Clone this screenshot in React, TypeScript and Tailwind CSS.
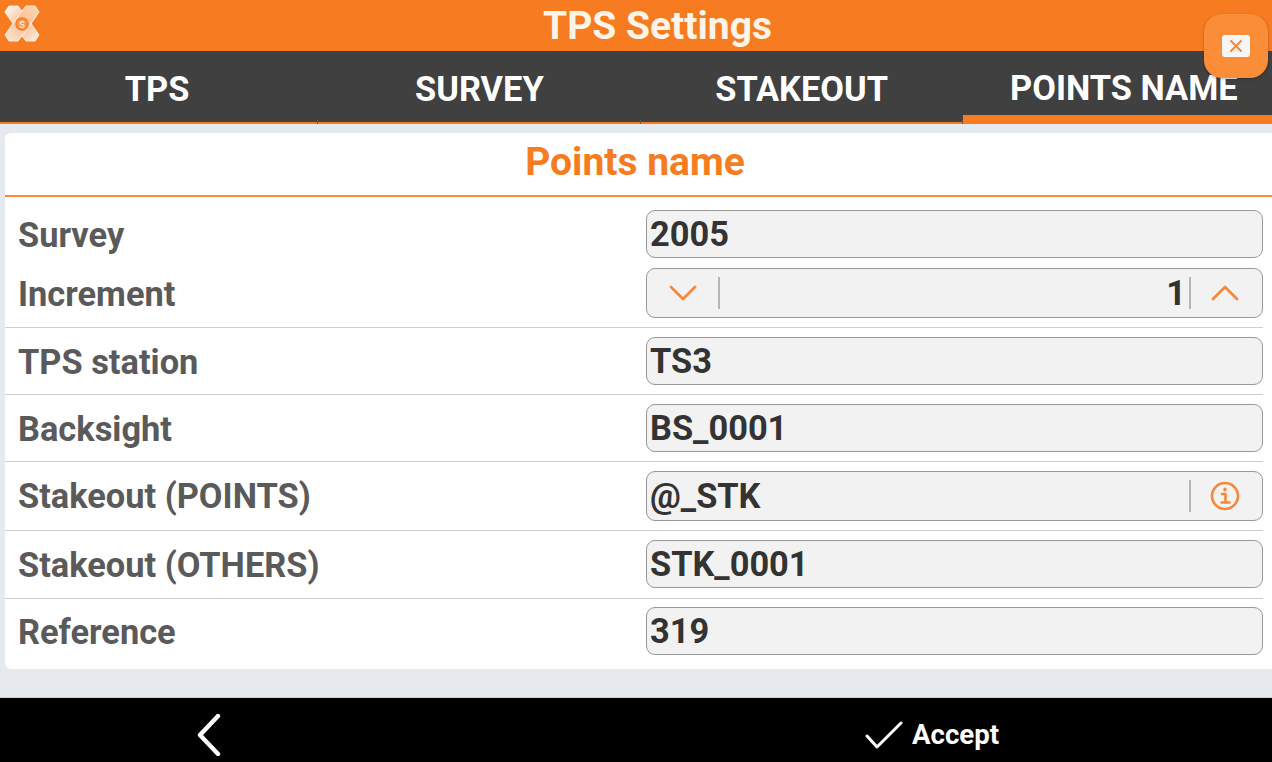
function Logo() {
  return (
    <svg width="36" height="37" viewBox="0 0 36 37" className="shrink-0">
      <defs>
        <linearGradient id="a" x1="0" y1="0" x2="1" y2="1">
          <stop offset="0" stopColor="#ffffff" />
          <stop offset="0.5" stopColor="#f9b98a" />
          <stop offset="1" stopColor="#fff1e6" />
        </linearGradient>
        <linearGradient id="b" x1="1" y1="0" x2="0" y2="1">
          <stop offset="0" stopColor="#fbd3b4" />
          <stop offset="0.5" stopColor="#fbc297" />
          <stop offset="1" stopColor="#fde6d3" />
        </linearGradient>
      </defs>
      <path d="M5 1H14L24 14L35 30L31 36H22L12 23L1 7Z" fill="url(#a)" stroke="#fff1e6" strokeWidth="1" strokeLinejoin="round" />
      <path d="M22 1H31L35 7L24 23L14 36H5L1 30L12 14Z" fill="url(#b)" stroke="#fff1e6" strokeWidth="1" strokeLinejoin="round" />
      <circle cx="18" cy="19" r="6" fill="#f9934c" stroke="#f77b21" strokeWidth="1.5" />
      <text x="18" y="23" textAnchor="middle" fontSize="12" fontFamily="Roboto" fill="#ffeede">s</text>
    </svg>
  );
}

function Tab({ label, active }: { label: string; active?: boolean }) {
  return (
    <div className={`flex-1 flex items-center justify-center relative border-[#f77b21] ${active ? "border-b-[9px]" : "border-b-2"}`}>
      <span className={active ? "relative top-[6px]" : "relative top-[3px]"}>{label}</span>
      {!active && <span className="absolute right-0 bottom-[-2px] w-px h-[4px] bg-[#6b5a4c]" />}
    </div>
  );
}

function Chevron({ up }: { up?: boolean }) {
  return (
    <svg width="28" height="16" viewBox="0 0 28 16" fill="none" stroke="#f7873a" strokeWidth="2.8" strokeLinecap="round" strokeLinejoin="round">
      <path d={up ? "M2 14L14 2L26 14" : "M2 2L14 14L26 2"} />
    </svg>
  );
}

function Field({ value }: { value: string }) {
  return (
    <div className="h-[48px] flex-1 rounded-[9px] border-[1.5px] border-[#999999] bg-[#f2f2f2] flex items-center pl-[3px] text-[34.4px] leading-none font-bold text-[#333333]">
      {value}
    </div>
  );
}

function Row({ label, children, divider, h, pt, top = "" }: { label: string; children: React.ReactNode; divider?: boolean; h: string; pt: string; top?: string }) {
  return (
    <div className={`${h} ${pt} flex ${divider ? "border-b border-[#cfcfcf]" : ""}`}>
      <div className={`w-[641px] text-[34.4px] leading-[50px] font-bold text-[#5a5a5a] pl-[13px] shrink-0 ${top}`}>{label}</div>
      {children}
    </div>
  );
}

export default function App() {
  return (
    <div className="w-[1272px] h-[762px] flex flex-col bg-[#e6e9ee] overflow-hidden relative font-['Roboto',sans-serif]">
      <header className="h-[51px] bg-[#f77b21] flex items-start pt-[5px] relative shrink-0">
        <div className="pl-[4px]"><Logo /></div>
        <div className="absolute inset-0 flex items-center justify-center text-[39px] font-bold text-[#fff4e8] pl-[43px] pt-[2px]">TPS Settings</div>
      </header>
      <nav className="h-[73px] bg-[#404040] flex text-[34.4px] font-bold text-white shrink-0 w-[1289px] ml-[-4px]">
        <Tab label="TPS" />
        <Tab label="SURVEY" />
        <Tab label="STAKEOUT" />
        <Tab label="POINTS NAME" active />
      </nav>
      <main className="mt-[9px] ml-[5px] h-[536px] bg-white rounded-tl-[6px] rounded-bl-[6px] shrink-0">
        <div className="h-[64px] border-b-2 border-[#f98a3c] flex items-center justify-center text-[39px] font-bold text-[#f77b21] pr-[7px] pb-[4px]">Points name</div>
        <div className="pr-[9px]">
          <div className="h-[13px]" />
          <Row label="Survey" h="h-[58px]" pt="pt-0"><Field value="2005" /></Row>
          <Row label="Increment" h="h-[60px]" pt="pt-0" divider top="pt-px">
            <div className="h-[50px] flex-1 rounded-[9px] border-[1.5px] border-[#999999] bg-[#f2f2f2] flex items-center text-[34.4px] font-bold text-[#333333]">
              <div className="w-[71px] flex justify-center pl-[1px]"><Chevron /></div>
              <div className="w-[2px] h-[32px] bg-[#b5b5b5]" />
              <div className="flex-1 text-right pr-[3px] leading-none">1</div>
              <div className="w-[2px] h-[32px] bg-[#b5b5b5]" />
              <div className="w-[71px] flex justify-center pr-[3px]"><Chevron up /></div>
            </div>
          </Row>
          <Row label="TPS station" h="h-[67px]" pt="pt-[9px]" divider><Field value="TS3" /></Row>
          <Row label="Backsight" h="h-[67px]" pt="pt-[9px]" divider><Field value="BS_0001" /></Row>
          <Row label="Stakeout (POINTS)" h="h-[69px]" pt="pt-[9px]" divider>
            <div className="h-[50px] flex-1 rounded-[9px] border-[1.5px] border-[#999999] bg-[#f2f2f2] flex items-center pl-[3px] text-[34.4px] font-bold text-[#333333]">
              <div className="flex-1 leading-none">@_STK</div>
              <div className="w-[2px] h-[32px] bg-[#b5b5b5]" />
              <div className="w-[71px] flex justify-center pr-[3px]">
                <svg width="30" height="30" viewBox="0 0 30 30" fill="none" stroke="#f7873a" strokeWidth="2.6" strokeLinecap="round" strokeLinejoin="round">
                  <circle cx="15" cy="15" r="13" />
                  <path d="M12 13H15.5V21.5M11.5 21.5H19.5" />
                  <path d="M15 8V9" strokeWidth="3.2" />
                </svg>
              </div>
            </div>
          </Row>
          <Row label="Stakeout (OTHERS)" h="h-[68px]" pt="pt-[9px]" divider><Field value="STK_0001" /></Row>
          <Row label="Reference" h="h-[58px]" pt="pt-[8px]"><Field value="319" /></Row>
        </div>
      </main>
      <footer className="absolute left-0 right-0 bottom-0 h-[65px] bg-black flex items-center text-white pt-[10px] border-t border-[#d0d0d0]">
        <div className="w-[417px] flex justify-center">
          <svg width="26" height="42" viewBox="0 0 26 42" fill="none" stroke="white" strokeWidth="4.4" strokeLinecap="round" strokeLinejoin="round">
            <path d="M22 2L4 21L22 40" />
          </svg>
        </div>
        <div className="ml-[448px] flex items-center gap-[9px]">
          <svg width="38" height="28" viewBox="0 0 38 28" fill="none" stroke="white" strokeWidth="3" strokeLinecap="round" strokeLinejoin="round">
            <path d="M2 15L12 26L36 2" />
          </svg>
          <span className="text-[27.6px] font-bold">Accept</span>
        </div>
      </footer>
      <button className="absolute left-[1204px] top-[14px] w-[64px] h-[64px] rounded-[18px] bg-[#fb8c38] shadow-[0_1px_3px_rgba(0,0,0,0.3)] flex items-center justify-center">
        <span className="w-[28px] h-[22px] rounded-[3px] bg-[#f6f6f6] flex items-center justify-center">
          <svg width="14" height="14" viewBox="0 0 14 14" stroke="#f7873a" strokeWidth="2" strokeLinecap="round">
            <path d="M2 2L12 12M12 2L2 12" />
          </svg>
        </span>
      </button>
    </div>
  );
}
